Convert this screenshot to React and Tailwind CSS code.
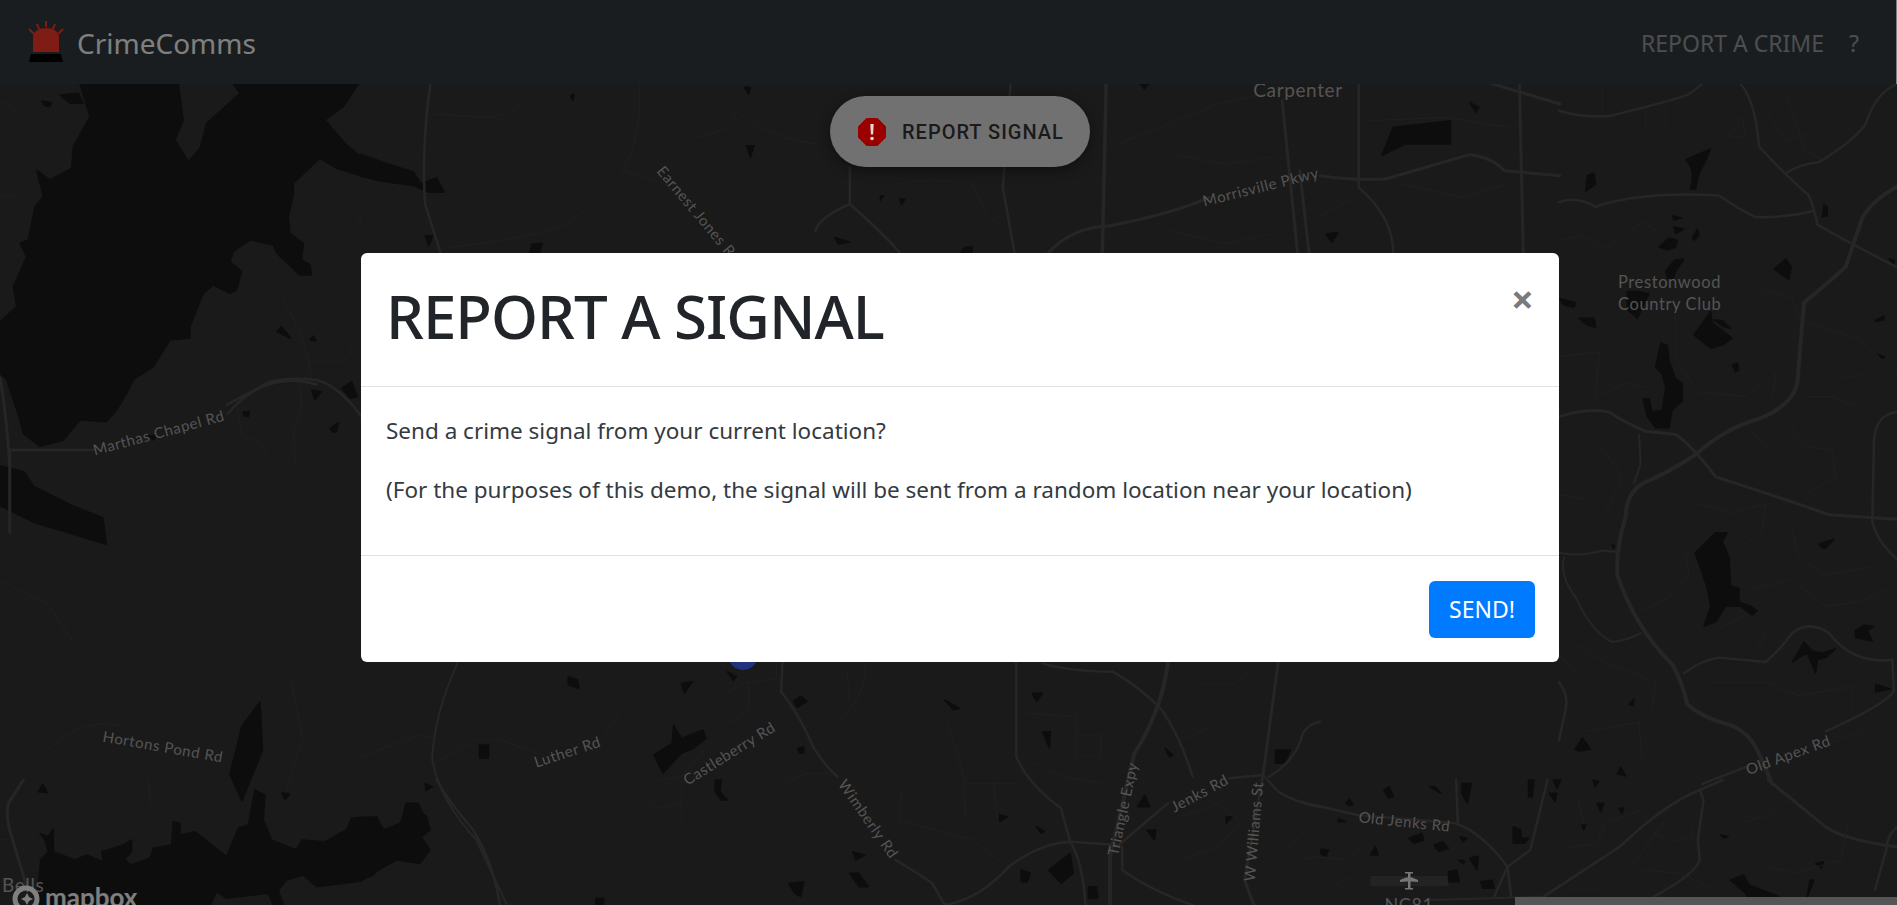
import React from 'react';

const WATER = '#1b1b1b';
const ROAD = '#4c4c4c';
const MINOR = '#3f3f3f';
const LABEL = '#a8a8a8';

function Water({ d }) {
  return <path d={d} fill={WATER} stroke={WATER} strokeWidth={1.5} strokeLinejoin="round" vectorEffect="non-scaling-stroke" />;
}

function Road({ d, w = 3, c = ROAD }) {
  return <path d={d} fill="none" stroke={c} strokeWidth={w} strokeLinejoin="round" strokeLinecap="round" vectorEffect="non-scaling-stroke" />;
}

function Label({ x, y, r = 0, size = 15, anchor = 'middle', weight = 400, children }) {
  return (
    <text
      x={x}
      y={y}
      fontSize={size}
      fontWeight={weight}
      fill={LABEL}
      textAnchor={anchor}
      letterSpacing="0.6"
      fontFamily="Lato, 'Open Sans', sans-serif"
      transform={`rotate(${r} ${x} ${y})`}
    >
      {children}
    </text>
  );
}

// Dark street map, traced by hand from the reference, one group per area
function MapLayer() {
  return (
    <svg className="absolute inset-0" width="1897" height="905" viewBox="0 0 1897 905">
      {/* top left lake */}
      <g transform="translate(0,80) scale(0.3333)">
        <Water d="M240 12L270 110L220 200L215 265L150 300L110 270L130 350L105 380L85 480L60 490L80 530L40 620L50 680L0 725L0 880L20 900L60 1020L70 1060L120 1100L190 1080L240 1020L320 1025L350 990L380 940L400 900L460 860L510 780L570 775L570 740L610 640L640 615L690 640L710 630L725 575L690 545L700 515L750 480L820 495L830 520L900 585L935 585L930 555L905 540L910 490L870 460L865 410L880 345L880 310L960 235L1010 265L1090 290L1110 280L1110 240L1070 220L1035 190L975 120L1030 80L1075 12L700 12L720 40L620 130L600 205L565 245L525 180L550 120L535 12Z" />
        <Water d="M180 45L235 40L250 70L210 70Z" />
        <Water d="M125 62L155 68L150 80L135 78Z" />
        <Water d="M830 755L845 740L872 775Z" />
        <Water d="M930 780L940 768L948 782Z" />
        <Water d="M935 930L965 935L945 960Z" />
        <Water d="M1025 925L1055 905L1072 950L1050 955Z" />
        <Water d="M730 995L748 995L745 1010L732 1008Z" />
        <Water d="M990 1045L1015 1028L1010 1055L1000 1058Z" />
        <Water d="M445 1068L470 1065L460 1080Z" />
        <Road d="M0 895Q20 1000 32 1200" w={3} />
        <Road d="M25 1110L280 1110" w={2.5} />
        <Road d="M680 975L810 905Q870 890 950 900Q1020 920 1083 1008" w={2.5} />
        <Road d="M850 660Q920 780 935 895" w={1} c={MINOR} />
        <Road d="M935 845L1025 845L1050 820L1050 800" w={1} c={MINOR} />
        <Road d="M710 975L725 1065L790 1095L800 1125" w={1} c={MINOR} />
        <Road d="M900 905L905 990L880 1050L885 1150" w={1} c={MINOR} />
        <Road d="M0 65Q50 85 85 125" w={1} c={MINOR} />
        <Road d="M0 345L35 350L55 335" w={1} c={MINOR} />
        <Road d="M1075 405L1085 430L1110 450" w={1} c={MINOR} />
      </g>

      {/* left side below the lake, bottom left corner */}
      <g transform="scale(1.2098)">
        <Water d="M0 385L20 390L28 402L60 418L85 428L88 450L62 442L28 432L0 418Z" />
        <Water d="M190 640L200 600L215 580L217 620L200 662Z" />
        <Road d="M8 440L8 372" w={3} />
        <Road d="M262 318Q220 305 188 342" w={2.5} />
        <Road d="M100 600Q60 590 20 640" w={1} c={MINOR} />
        <Road d="M240 560L250 610L235 660" w={1} c={MINOR} />
        <Road d="M0 480L40 500L60 530" w={1} c={MINOR} />
      </g>
      <g transform="translate(0,780) scale(0.3333)">
        <Water d="M110 375L122 240L145 215L135 180L120 160L145 170L160 145L160 215L225 240L260 225L310 245L305 215L370 195L395 180L395 215L375 235L390 255L450 235L460 205L515 195L520 125L540 130L540 165L585 155L680 230L715 145L745 135L765 30L795 45L790 120L815 180L890 210L905 180L975 185L1040 150L1055 115L1130 110L1150 150L1200 130L1230 70L1280 110L1290 150L1260 165L1290 210L1260 250L1200 235L1140 255L1120 285L1070 305L950 320L910 285L860 300L835 330L850 375L820 375L805 340L680 355L650 335L630 375Z" />
        <Water d="M115 35L128 12L142 38Z" />
        <Water d="M845 38L870 42L855 58Z" />
        <Water d="M1275 10L1298 20L1278 32Z" />
        <Road d="M70 0L25 70Q15 110 35 170L80 320" w={3} />
        <Road d="M1310 0Q1350 70 1420 150Q1480 250 1500 375" w={2.5} />
        <Road d="M0 178L35 178" w={1} c={MINOR} />
        <Road d="M445 0L452 70" w={1} c={MINOR} />
      </g>

      {/* above the modal */}
      <g transform="translate(360,84) scale(0.7653,0.3333)">
        <Water d="M0 210L30 235L70 265L80 300L100 280L110 325L90 325L70 305L25 290L0 275Z" />
        <Water d="M1350 130L1425 110L1425 180L1365 180L1335 215Z" />
        <Water d="M505 185L515 185L510 220Z" />
        <Water d="M85 455L95 455L90 485Z" />
        <Water d="M225 480L238 478L235 505L222 505Z" />
        <Water d="M1450 55L1462 70L1458 85Z" />
        <Water d="M275 35L280 30L278 50Z" />
        <Water d="M790 490L800 490L800 505L785 505Z" />
        <Water d="M1262 450L1278 445L1270 475Z" />
        <Water d="M620 460L640 475L625 480Z" />
        <Water d="M502 10L510 10L508 30Z" />
        <Water d="M1020 0L1030 0L1025 15Z" />
        <Water d="M680 335L684 335L680 350Z" />
        <Water d="M705 345L712 345L708 362Z" />
        <Road d="M92 0Q80 200 85 360L105 505" w={2.5} />
        <Road d="M640 250L640 360Q680 440 705 505" w={2.5} />
        <Road d="M640 360Q600 400 595 440" w={2.5} />
        <Road d="M850 0L840 310L855 505" w={2.5} />
        <Road d="M975 0L970 505" w={3.5} />
        <Road d="M900 505Q930 430 980 425Q1060 390 1110 340" w={3} />
        <Road d="M1255 275Q1300 290 1340 285L1450 212Q1480 220 1495 260L1568 275" w={3} />
        <Road d="M1205 50L1225 505" w={3} />
        <Road d="M1228 260L1240 505" w={3} />
        <Road d="M1305 0L1305 310Q1350 400 1350 505" w={2.5} />
        <Road d="M1515 0L1520 505" w={3} />
        <Road d="M1480 0L1568 60" w={3} />
        <Road d="M95 90L170 100Q200 90 220 40" w={1} c={MINOR} />
        <Road d="M345 260Q400 290 420 340" w={1} c={MINOR} />
        <Road d="M345 260Q370 140 365 0" w={1} c={MINOR} />
        <Road d="M345 260Q290 400 260 430Q200 470 100 495" w={1} c={MINOR} />
        <Road d="M440 160Q490 140 490 80" w={1} c={MINOR} />
        <Road d="M490 80Q540 170 600 180" w={1} c={MINOR} />
        <Road d="M700 300Q750 280 800 300L820 400L840 420" w={1} c={MINOR} />
        <Road d="M990 180Q1050 130 1120 60L1180 30" w={1} c={MINOR} />
        <Road d="M1060 210L1130 240L1190 220" w={1} c={MINOR} />
        <Road d="M1320 110L1420 100L1500 130" w={1} c={MINOR} />
        <Road d="M1360 300L1440 340L1500 300" w={1} c={MINOR} />
        <Road d="M1060 440L1130 480L1190 450" w={1} c={MINOR} />
        <Road d="M1250 400L1300 340" w={1} c={MINOR} />
      </g>

      {/* right of the modal */}
      <g transform="translate(1559,84) scale(0.3333,0.4464)">
        <Water d="M380 170L455 145Q440 175 420 200L410 235L395 235Q410 190 380 170Z" />
        <Water d="M80 240L85 205L105 200L110 225Z" />
        <Water d="M300 365L330 345L355 350L350 365L325 372Z" />
        <Water d="M340 295L368 300L345 305Z" />
        <Water d="M345 320L375 325L350 335Z" />
        <Water d="M400 345L415 325L420 340L405 350Z" />
        <Water d="M320 420L345 395L375 392L350 420L340 440L325 435Z" />
        <Water d="M205 465L240 465L270 470L235 525L205 505Z" />
        <Water d="M0 480L50 490L45 500L15 495Z" />
        <Water d="M60 525L105 525L110 545L85 540Z" />
        <Water d="M405 562L455 510L460 535L520 570L490 585L455 592Z" />
        <Water d="M465 528L490 530L515 548L490 542Z" />
        <Water d="M305 580L325 585L330 620L350 660L370 670L370 710L340 730L330 770L290 770L265 745L252 705L270 705L280 735L310 730L320 680L310 650L290 635Z" />
        <Water d="M645 415L680 392L697 410L690 438Z" />
        <Water d="M520 630L535 625L540 640L530 645Z" />
        <Water d="M948 530L975 520L975 528L950 532Z" />
        <Water d="M955 605L978 612L970 615Z" />
        <Water d="M990 392L1005 395L1005 402Z" />
        <Water d="M795 270L805 275L805 295L790 298Z" />
        <Water d="M408 1050L470 1005L505 1005L490 1025L510 1060L515 1125L540 1130L540 1160L575 1170L595 1180L580 1190L545 1170L500 1170L470 1205L435 1215L455 1170L445 1130L425 1085Z" />
        <Water d="M780 1030L825 1020L800 1040L790 1040Z" />
        <Water d="M888 1225L915 1212L945 1215L925 1225L940 1248L890 1240Z" />
        <Water d="M700 1295L735 1250L760 1270L790 1275L830 1265L800 1285L775 1290L770 1320L745 1275L720 1285Z" />
        <Water d="M950 1345L995 1355L950 1362Z" />
        <Water d="M48 1490L70 1465L95 1490L60 1495Z" />
        <Water d="M175 1545L185 1530L200 1550Z" />
        <Water d="M210 1390L225 1378L222 1392Z" />
        <Water d="M158 1033L166 1033L165 1040Z" />
        <Road d="M0 60Q60 75 150 72Q300 45 385 25L430 0" w={2.5} />
        <Road d="M545 0Q590 40 600 140Q660 190 750 250Q770 290 775 315Q880 360 1014 410" w={2.5} />
        <Road d="M680 200Q720 180 780 175Q880 130 920 90Q950 20 1014 0" w={2.5} />
        <Road d="M0 265Q50 250 110 275Q250 240 480 250Q550 285 590 298Q680 300 760 285" w={2.5} />
        <Road d="M1014 230Q940 260 910 300L860 410Q800 450 735 490L715 670Q700 720 600 750Q500 770 410 830Q330 870 250 895Q200 920 200 970Q170 1040 175 1100Q230 1220 340 1300Q370 1340 385 1390Q430 1420 510 1435Q570 1450 600 1500L640 1568" w={4} />
        <Road d="M0 745Q90 725 150 735Q200 760 260 778L350 785Q400 810 470 880Q640 920 810 965L1014 975" w={3} />
        <Road d="M240 785L245 850L225 895" w={2} />
        <Road d="M1014 735Q950 740 945 800L940 980Q950 1020 1014 1065" w={2.5} />
        <Road d="M0 1050Q60 1060 130 1045L170 1048" w={2} />
        <Road d="M15 1060Q0 1100 50 1150Q100 1230 160 1250Q210 1245 245 1230" w={2} />
        <Road d="M375 1320Q430 1290 480 1285L620 1295Q660 1270 700 1230Q750 1200 810 1230Q880 1300 1000 1290L1005 1360Q980 1390 800 1450" w={2.5} />
        <Road d="M560 1530L430 1568" w={2.5} />
        <Road d="M0 1340Q30 1370 20 1400L0 1470" w={2.5} />
        <Road d="M130 0L130 60M260 60L260 110M320 50L320 105M510 115L550 75L560 120Z" w={1} c={MINOR} />
        <Road d="M620 60L680 130L740 110M680 20L740 150L800 170" w={1} c={MINOR} />
        <Road d="M0 350L70 340L140 370L250 310L300 330" w={1} c={MINOR} />
        <Road d="M0 610L120 600L110 700L200 670L260 680" w={1} c={MINOR} />
        <Road d="M350 520L350 620L420 690L560 700L650 650L640 700" w={1} c={MINOR} />
        <Road d="M560 500L620 460L700 480L720 530L900 570L1014 650" w={1} c={MINOR} />
        <Road d="M740 700L820 700L880 720L950 680M850 660L910 650" w={1} c={MINOR} />
        <Road d="M580 780L640 830M700 770L730 810L820 820L830 880L740 920" w={1} c={MINOR} />
        <Road d="M50 880L130 815L190 880L140 960M0 920L80 930" w={1} c={MINOR} />
        <Road d="M410 940L520 960L620 940L610 1000L560 1030" w={1} c={MINOR} />
        <Road d="M700 1000L720 1060L800 1100L950 1080" w={1} c={MINOR} />
        <Road d="M300 1100L380 1050L390 1100L330 1150L250 1180" w={1} c={MINOR} />
        <Road d="M580 1130L700 1110L800 1170L900 1160L1000 1130" w={1} c={MINOR} />
        <Road d="M480 1220L560 1190L620 1230L590 1270" w={1} c={MINOR} />
        <Road d="M40 1250L150 1300L290 1340L280 1400M0 1280L60 1320" w={1} c={MINOR} />
        <Road d="M450 1340L620 1340L720 1370L880 1350L880 1400" w={1} c={MINOR} />
        <Road d="M80 1450L240 1430L250 1520" w={1} c={MINOR} />
        <Road d="M800 1480L920 1450L1000 1510" w={1} c={MINOR} />
      </g>

      {/* below the modal */}
      <g transform="translate(360,660) scale(0.6122,0.3333)">
        <Water d="M0 470L25 480L40 510L65 505L75 430L95 430L115 510L100 530L110 570L95 610L60 600L40 620L0 665Z" />
        <Water d="M480 285L510 250L512 195L525 235L560 210L565 235L545 265L525 280L495 340Z" />
        <Water d="M340 50L355 60L358 85L340 75Z" />
        <Water d="M525 70L543 65L530 100Z" />
        <Water d="M600 35L615 50L610 62Z" />
        <Water d="M708 125L720 108L730 125L715 142Z" />
        <Water d="M195 255L210 255L210 295L195 295Z" />
        <Water d="M580 360L590 360L588 395L600 420L590 420L580 395Z" />
        <Water d="M715 265L725 260L725 280L718 280Z" />
        <Water d="M805 575L825 585L810 600Z" />
        <Water d="M800 640L815 640L830 680L815 680Z" />
        <Water d="M700 670L725 665L720 710L710 700Z" />
        <Water d="M385 715L398 715L398 735L385 735Z" />
        <Water d="M1098 100L1115 100L1105 125Z" />
        <Water d="M1115 215L1128 215L1126 265Z" />
        <Water d="M1282 405L1290 440L1270 440Z" />
        <Water d="M1495 270L1520 270L1510 310L1495 310Z" />
        <Water d="M1125 630L1160 580L1165 640L1145 670Z" />
        <Water d="M1080 630L1095 640L1090 665L1080 665Z" />
        <Water d="M1190 680L1203 680L1205 715L1190 715Z" />
        <Water d="M1285 510L1300 510L1298 540Z" />
        <Water d="M1415 470L1425 470L1415 490Z" />
        <Water d="M955 120L980 145L970 150Z" />
        <Water d="M1045 465L1058 470L1045 485Z" />
        <Water d="M1105 500L1118 515L1112 520Z" />
        <Water d="M1315 265L1328 285L1322 290Z" />
        <Road d="M160 5Q120 170 118 300Q130 420 190 540L240 735" w={2} />
        <Road d="M690 5L688 95Q720 170 740 260Q760 320 780 350" w={2.5} />
        <Road d="M875 600Q920 650 935 670L955 735" w={2.5} />
        <Road d="M1072 5L1072 290Q1090 370 1145 445L1160 545Q1180 600 1185 735" w={2.5} />
        <Road d="M955 735Q1010 720 1060 620Q1110 550 1160 545L1240 555Q1300 460 1320 430" w={2.5} />
        <Road d="M1420 355L1475 345L1500 395Q1530 430 1568 440" w={2.5} />
        <Road d="M1320 5Q1310 150 1265 280L1225 590L1225 735" w={4} />
        <Road d="M1115 10Q1160 35 1230 35Q1280 90 1310 150Q1340 230 1360 350" w={2.5} />
        <Road d="M1500 5L1475 345L1445 660L1460 735" w={3} />
        <Road d="M1485 350Q1530 300 1540 220Q1550 190 1568 185" w={2.5} />
        <Road d="M1245 560L1245 630Q1290 690 1360 735" w={2.5} />
        <Road d="M635 70L635 150L600 190L525 350L490 360" w={1} c={MINOR} />
        <Road d="M625 70L680 55L680 10M595 105L625 70" w={1} c={MINOR} />
        <Road d="M400 220Q440 110 480 50M120 310L190 240L230 240L290 280" w={1} c={MINOR} />
        <Road d="M0 290L100 225L120 235" w={1} c={MINOR} />
        <Road d="M525 360L525 500M470 430L490 445L525 430" w={1} c={MINOR} />
        <Road d="M690 370L730 340L770 340M885 400L880 480L940 510L1000 540L1050 610" w={1} c={MINOR} />
        <Road d="M960 190L990 370L1070 370M985 370L990 480M1035 370L1040 470" w={1} c={MINOR} />
        <Road d="M780 190Q830 100 825 10M800 120L795 30" w={1} c={MINOR} />
        <Road d="M1090 160L1170 170L1170 290L1210 290L1210 225L1170 225M1100 310L1150 350L1210 370" w={1} c={MINOR} />
        <Road d="M1340 470L1400 430L1440 490L1400 560L1340 600M1500 600L1540 520" w={1} c={MINOR} />
        <Road d="M1340 240L1390 200M1370 70L1430 70L1450 40" w={1} c={MINOR} />
      </g>

      {/* bottom right */}
      <g transform="translate(1300,780) scale(0.3807,0.3333)">
        <rect x="185" y="288" width="205" height="30" fill="#474747" />
        <Water d="M220 30L235 20L245 50L232 55Z" />
        <Water d="M340 20L355 20L370 40Z" />
        <Water d="M120 70L130 58L140 72L130 78Z" />
        <Water d="M425 10L450 10L440 70L425 40Z" />
        <Water d="M600 0L615 0L610 50L600 50Z" />
        <Water d="M665 0L685 0L675 25Z" />
        <Water d="M655 40L675 40L670 65Z" />
        <Water d="M770 0L785 5L775 20Z" />
        <Water d="M780 70L798 70L790 95Z" />
        <Water d="M838 85L850 85L845 100Z" />
        <Water d="M740 135L752 135L745 150Z" />
        <Water d="M560 140L580 150L580 175L600 175L590 190L560 190Z" />
        <Water d="M285 175L320 160L325 180L300 190Z" />
        <Water d="M352 195L375 185L390 205L365 215Z" />
        <Water d="M420 170L438 175L428 185Z" />
        <Water d="M55 208L75 210L68 228L55 222Z" />
        <Water d="M185 225L198 200L205 225Z" />
        <Water d="M415 240L432 242L430 252Z" />
        <Water d="M445 235L468 228L465 270Z" />
        <Water d="M390 275L412 270L418 305L390 305Z" />
        <Water d="M475 305L505 300L510 325L480 325Z" />
        <Water d="M1130 300L1165 285L1180 315L1260 350L1190 375L1170 340Z" />
        <Water d="M1340 300L1350 300L1330 360Z" />
        <Water d="M1355 250L1375 245L1370 265Z" />
        <Water d="M1105 165L1125 170L1115 175Z" />
        <Water d="M100 115L120 125L100 125Z" />
        <Road d="M0 65L150 105L410 130Q480 160 545 260L605 210L650 0" w={2.5} />
        <Road d="M545 260L510 350M545 260L555 350" w={2.5} />
        <Road d="M410 0L415 135" w={2.5} />
        <Road d="M640 350L840 200Q960 70 1050 30L1110 0" w={2.5} />
        <Road d="M1050 30L1060 60L1045 180L1050 240Q1040 280 930 350" w={2.5} />
        <Road d="M1230 0L1380 140Q1430 180 1568 200" w={3} />
        <Road d="M340 360L640 350" w={2} />
        <Road d="M1568 140Q1540 170 1540 210L1510 330" w={2.5} />
        <Road d="M0 240L40 230L120 240L160 200M60 340L130 290" w={1} c={MINOR} />
        <Road d="M690 205L780 190L800 130L900 90M730 55L745 130" w={1} c={MINOR} />
        <Road d="M930 160L975 185L1030 170L1030 130M870 260L960 120" w={1} c={MINOR} />
        <Road d="M1230 260L1300 280L1420 240L1440 130M1160 130L1240 100L1300 40" w={1} c={MINOR} />
        <Road d="M700 330L800 330M900 270L1000 280L1090 330" w={1} c={MINOR} />
      </g>

      <circle cx="743" cy="655" r="15" fill="#4264fb" />

      <Label x={1298} y={97} size={19}>Carpenter</Label>
      <Label x={1262} y={192} r={-14}>Morrisville Pkwy</Label>
      <Label x={695} y={218} r={50}>Earnest Jones Rd</Label>
      <Label x={160} y={438} r={-15}>Marthas Chapel Rd</Label>
      <Label x={162} y={752} r={10}>Hortons Pond Rd</Label>
      <Label x={569} y={757} r={-18}>Luther Rd</Label>
      <Label x={732} y={758} r={-32}>Castleberry Rd</Label>
      <Label x={864} y={822} r={55}>Wimberly Rd</Label>
      <Label x={1128} y={810} r={-78}>Triangle Expy</Label>
      <Label x={1202} y={798} r={-28}>Jenks Rd</Label>
      <Label x={1259} y={832} r={-85}>W Williams St</Label>
      <Label x={1404} y={827} r={6}>Old Jenks Rd</Label>
      <Label x={1790} y={760} r={-20}>Old Apex Rd</Label>
      <Label x={1618} y={288} size={16.5} anchor="start">Prestonwood</Label>
      <Label x={1618} y={310} size={16.5} anchor="start">Country Club</Label>
      <Label x={2} y={892} size={19} anchor="start">Bells</Label>
      <Label x={1409} y={911} size={18}>NC81</Label>

      {/* airport */}
      <g fill="#ededed">
        <rect x="1408" y="872" width="2.5" height="17" />
        <rect x="1405" y="872" width="8" height="1.5" />
        <rect x="1405" y="888" width="8" height="1.5" />
        <path d="M1400 880L1406 877.5H1412L1418 880V882L1412 881.5H1406L1400 882Z" />
      </g>

      {/* mapbox logo */}
      <circle cx="26" cy="899" r="11" fill="none" stroke="#ffffff" strokeWidth="5" />
      <path d="M27 893L29 897L33 899L29 901L27 905L25 901L21 899L25 897Z" fill="#ffffff" />
      <text x="45" y="907" fontSize="26" fontWeight="700" fill="#ffffff" fontFamily="Lato, sans-serif">mapbox</text>
    </svg>
  );
}

function SirenLogo() {
  return (
    <svg width="36" height="42" viewBox="0 0 36 42" className="shrink-0">
      <path d="M5 31V17C5 10 11 7 18 7C25 7 31 10 31 17V31Z" fill="#fe3a28" />
      <path d="M3 33H33L35 41H1Z" fill="#000000" />
      <path d="M18 0V6M9 3L11 8M27 3L25 8M1 8L6 13M35 8L30 13" stroke="#fe3a28" strokeWidth="2" fill="none" />
    </svg>
  );
}

export default function App() {
  return (
    <div className="relative h-[905px] w-full overflow-hidden bg-[#343434] font-['Noto_Sans',sans-serif]">
      <MapLayer />

      <nav className="relative flex h-[84px] items-center justify-between border-r border-white bg-[#343a40] pl-[28px] pr-[37px]">
        <div className="flex items-center gap-[13px]">
          <SirenLogo />
          <span className="pt-[2px] text-[28px] leading-none text-white">CrimeComms</span>
        </div>
        <div className="flex items-center gap-[25px] pt-[2px] text-[23px] text-white/50">
          <a>REPORT A CRIME</a>
          <a>?</a>
        </div>
      </nav>

      <div className="absolute inset-0 bg-black/50" />

      {/* the pill sits above the backdrop colour-wise, so its greys are the final ones */}
      <button className="absolute left-[830px] top-[96px] flex h-[71px] w-[260px] items-center gap-[16px] rounded-full bg-[#717171] pl-[28px] shadow-[0_4px_12px_rgba(0,0,0,0.4)] font-['Roboto',sans-serif]">
        <svg width="28" height="28" viewBox="0 0 28 28">
          <path d="M8.5 0H19.5L28 8.5V19.5L19.5 28H8.5L0 19.5V8.5Z" fill="#9b0000" />
          <path d="M12.3 6H15.7L15.1 16.5H12.9Z" fill="#e8d8d8" />
          <circle cx="14" cy="20.5" r="1.8" fill="#e8d8d8" />
        </svg>
        <span className="text-[20px] font-medium tracking-[1px] text-[#1a1a1a]">REPORT SIGNAL</span>
      </button>

      <div className="absolute inset-0 pt-[253px]">
        <div className="ml-[361px] w-[1198px] rounded-[6px] bg-white text-[#212529]">
          <div className="flex h-[134px] items-start justify-between border-b border-[#dee2e6] pl-[25px] pr-[25px]">
            <h2 className="pt-[19px] text-[60px] font-medium leading-[88px] tracking-[-1px]">REPORT A SIGNAL</h2>
            <span className="mt-[24px] text-[40px] font-bold leading-[44px] text-[#7a7a7a]">×</span>
          </div>
          <div className="h-[169px] border-b border-[#dee2e6] px-[25px] pt-[28px] text-[22.5px] leading-[32px] text-[#343a40]">
            <p>Send a crime signal from your current location?</p>
            <p className="mt-[27px]">(For the purposes of this demo, the signal will be sent from a random location near your location)</p>
          </div>
          <div className="flex h-[106px] items-center justify-end pr-[24px]">
            <button className="flex h-[57px] w-[106px] items-center justify-center rounded-[6px] bg-[#007bff] text-[23px] text-white">SEND!</button>
          </div>
        </div>
      </div>

      <div className="absolute bottom-0 right-0 h-[8px] w-[382px] bg-[#555555]" />
    </div>
  );
}
